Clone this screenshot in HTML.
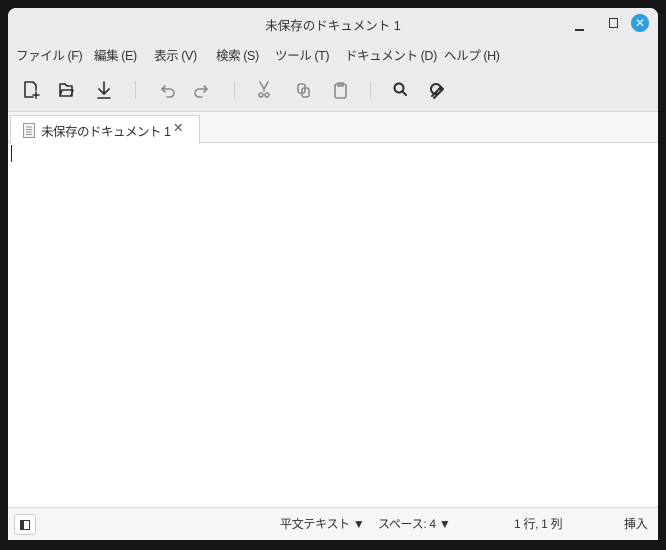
<!DOCTYPE html>
<html><head><meta charset="utf-8"><style>
*{margin:0;padding:0;box-sizing:border-box}
body{width:666px;height:550px;background:#161616;position:relative;overflow:hidden;font-family:"Liberation Sans","Noto Sans CJK JP",sans-serif;color:#2e2e2e}
.win{position:absolute;left:8px;top:8px;width:650px;height:532px;background:#fff;border-radius:8px 8px 0 0;overflow:hidden}
.head{position:absolute;left:0;top:0;width:650px;height:103px;background:#ebebed}
.title{position:absolute;top:7px;width:100%;text-align:center;font-size:12.5px;color:#333}
.menu span{position:absolute;top:37px;font-size:12.5px;color:#333;white-space:nowrap;letter-spacing:-0.4px}
.sep{position:absolute;top:73px;width:1px;height:18px;background:#cfcfcf}
.tabbar{position:absolute;top:103px;left:0;width:650px;height:32px;background:#f6f6f6;border-top:1px solid #d4d4d4;border-bottom:1px solid #d4d4d4}
.tab{position:absolute;left:2px;top:3px;width:190px;height:29px;background:#fff;border:1px solid #d4d4d4;border-bottom:none;font-size:12.5px}
.status{position:absolute;top:499px;left:0;width:650px;height:33px;background:#f6f6f6;border-top:1px solid #d4d4d4;font-size:12px;color:#333}
.status span{position:absolute;top:7px;white-space:nowrap;letter-spacing:-0.3px}
</style></head><body>
<div class="win">
<div class="head">
<div class="title">未保存のドキュメント 1</div>
<div style="position:absolute;left:567px;top:21px;width:9px;height:1.5px;background:#333"></div>
<div style="position:absolute;left:601px;top:10px;width:9px;height:10px;border:1.5px solid #333"></div>
<div style="position:absolute;left:623px;top:6px;width:18px;height:18px;border-radius:50%;background:#2d9fe0;color:#fff;font-size:12px;text-align:center;line-height:18px">✕</div>
<div class="menu"><span style="left:8px">ファイル (F)</span><span style="left:86px">編集 (E)</span><span style="left:146px">表示 (V)</span><span style="left:208px">検索 (S)</span><span style="left:267px">ツール (T)</span><span style="left:337px">ドキュメント (D)</span><span style="left:436px">ヘルプ (H)</span></div>
<svg style="position:absolute;left:0;top:70px" width="650" height="24" fill="none" stroke-width="1.6" stroke-linecap="round" stroke-linejoin="round">
<g stroke="#2e2e2e"><path d="M25 19H17V4h8l3 3v5"/><path d="M28 14v6M25 17h6"/>
<path d="M52 18V6h5l2 2h5v10z M52 18l2-6h11l-2 6"/>
<path d="M96 4v11M91 11l5 5 5-5M90 20h12"/></g>
<g stroke="#8a8a8a"><path d="M154 11h8a4 4 0 0 1 0 8h-3M157 8l-3 3 3 3"/><path d="M199 11h-8a4 4 0 0 0 0 8h3M196 8l3 3-3 3"/>
<path d="M252 4l4 7 4-7M256 11v2"/><circle cx="253" cy="17" r="2"/><circle cx="259" cy="17" r="2"/>
<rect x="290" y="6" width="7" height="9" rx="2"/><rect x="294" y="10" width="7" height="9" rx="2"/>
<rect x="327" y="6" width="11" height="14" rx="2"/><path d="M330 5h5v3h-5z"/></g>
<g stroke="#2e2e2e" stroke-width="2"><circle cx="391" cy="10" r="4.5"/><path d="M394.5 13.5l3.5 3.5"/>
<circle cx="428" cy="11" r="5"/><path d="M424 18l9-9 2 2-9 9"/></g>
</svg>
<div class="sep" style="left:127px"></div><div class="sep" style="left:226px"></div><div class="sep" style="left:362px"></div>
</div>
<div class="tabbar"><div class="tab">
<svg style="position:absolute;left:12px;top:7px" width="12" height="15"><rect x="0.5" y="0.5" width="11" height="14" fill="#f4f4f4" stroke="#999"/><path d="M3 4h6M3 6.5h6M3 9h6M3 11.5h6" stroke="#999"/></svg>
<span style="position:absolute;left:30px;top:5px;letter-spacing:-0.5px;white-space:nowrap">未保存のドキュメント 1</span>
<span style="position:absolute;left:162px;top:4px;color:#555">✕</span></div></div>
<div style="position:absolute;left:3px;top:137px;width:1px;height:17px;background:#222"></div>
<div class="status">
<div style="position:absolute;left:6px;top:6px;width:22px;height:21px;border:1px solid #ccc;border-radius:3px;background:#fff"><div style="position:absolute;left:5px;top:5px;width:10px;height:10px;border:1.5px solid #333;border-left-width:4px"></div></div>
<span style="left:272px">平文テキスト ▼</span><span style="left:370px">スペース: 4 ▼</span><span style="left:506px">1 行, 1 列</span><span style="left:616px">挿入</span>
</div>
</div>
</body></html>
